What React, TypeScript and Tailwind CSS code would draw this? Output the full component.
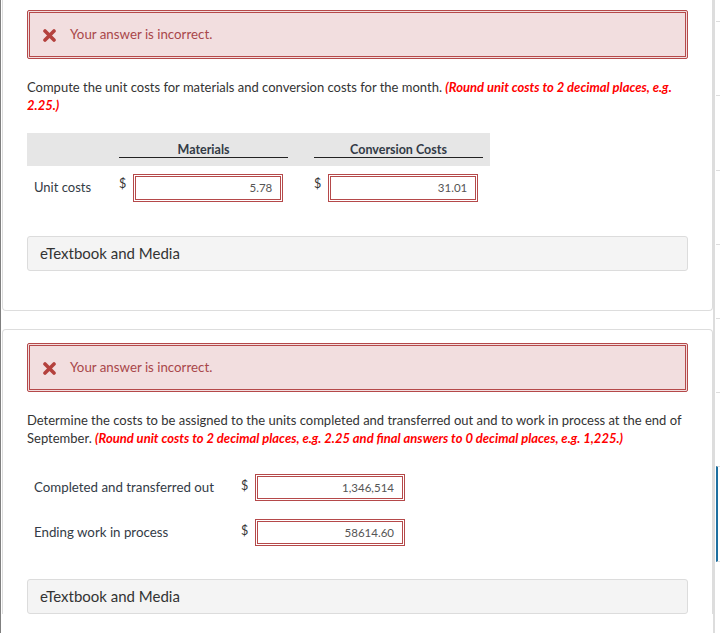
import React from "react";

const font = { fontFamily: "Lato, 'Open Sans', sans-serif" };

function XMark() {
  return (
    <svg width="13" height="13" viewBox="0 0 13 13" className="mt-[1px] shrink-0">
      <path d="M2 2 L11 11 M11 2 L2 11" stroke="#b4413d" strokeWidth="3.6" strokeLinecap="round" />
    </svg>
  );
}

function ErrorBox() {
  return (
    <div className="flex h-[49px] items-center gap-[14px] rounded-[2px] border-[3px] border-double border-[#b5494a] bg-[#f2dedf] pl-[13px]">
      <XMark />
      <span className="pt-px text-[13.3px] text-[#a9474a]">Your answer is incorrect.</span>
    </div>
  );
}

function AnswerInput({ value, h = "h-[28px]" }: { value: string; h?: string }) {
  return (
    <div className={`flex ${h} w-[150px] items-center justify-end border-[3px] border-double border-[#b5494a] bg-white pr-[8px] text-[11.5px] text-[#555]`}>
      {value}
    </div>
  );
}

function MediaBar() {
  return (
    <div className="flex h-[35px] items-center rounded-[3px] border border-[#dcdcdc] bg-[#f4f4f4] pl-[12px] text-[15px] text-[#333]">
      eTextbook and Media
    </div>
  );
}

export default function App() {
  return (
    <div style={font} className="flex h-[633px] w-[720px] overflow-hidden border-l border-[#7f7f7f] bg-white text-[#333]">
      <div className="w-[712px] shrink-0 pl-px">
        {/* Part 1 */}
        <div className="rounded-b-[4px] border border-t-0 border-[#dddddd] px-[24px] pb-[39px] pt-[10px]">
          <ErrorBox />
          <p className="mt-[19px] text-[13px] leading-[18px] text-[#333]">
            Compute the unit costs for materials and conversion costs for the month.{" "}
            <span className="font-bold italic text-[#ff0000]">(Round unit costs to 2 decimal places, e.g. 2.25.)</span>
          </p>

          <div className="mt-[19px] w-[463px]">
            <div className="grid h-[33px] grid-cols-[66px_169px_169px] gap-x-[26px] bg-[#e6e6e6] pr-[7px]">
              <div />
              <div className="flex flex-col justify-end pb-[8px]">
                <div className="border-b border-[#222] text-center text-[12.5px] font-bold leading-[15px] text-[#333b46]">
                  Materials
                </div>
              </div>
              <div className="flex flex-col justify-end pb-[8px]">
                <div className="border-b border-[#222] text-center text-[12.5px] font-bold leading-[15px] text-[#333b46]">
                  Conversion Costs
                </div>
              </div>
            </div>
            <div className="mt-[8px] grid grid-cols-[66px_169px_169px] items-center gap-x-[26px]">
              <span className="whitespace-nowrap pl-[7px] text-[13px] text-[#333b46]">Unit costs</span>
              <div className="flex items-start gap-[7px]">
                <span className="mt-[1px] text-[12.5px]">$</span>
                <AnswerInput value="5.78" />
              </div>
              <div className="flex items-start gap-[7px]">
                <span className="mt-[1px] text-[12.5px]">$</span>
                <AnswerInput value="31.01" />
              </div>
            </div>
          </div>

          <div className="mt-[34px]">
            <MediaBar />
          </div>
        </div>

        {/* Part 2 */}
        <div className="mt-[18px] rounded-t-[4px] border border-b-0 border-[#dddddd] px-[24px] pt-[13px]">
          <ErrorBox />
          <p className="mt-[19px] text-[13px] leading-[18px] text-[#333]">
            Determine the costs to be assigned to the units completed and transferred out and to work in process at the end of
            September.{" "}
            <span className="font-bold italic text-[#ff0000]">
              (Round unit costs to 2 decimal places, e.g. 2.25 and final answers to 0 decimal places, e.g. 1,225.)
            </span>
          </p>

          <div className="mt-[27px] flex flex-col gap-[18px]">
            {[
              ["Completed and transferred out", "1,346,514"],
              ["Ending work in process", "58614.60"],
            ].map(([label, value]) => (
              <div key={label} className="flex items-center">
                <span className="w-[214px] pl-[7px] text-[13.3px] text-[#333b46]">{label}</span>
                <span className="-mt-[3px] w-[14px] text-[12.5px]">$</span>
                <AnswerInput value={value} h="h-[27px]" />
              </div>
            ))}
          </div>

          <div className="mt-[33px]">
            <MediaBar />
          </div>
        </div>
      </div>

      {/* right rail */}
      <div className="flex flex-1 flex-col border-l-2 border-[#dddddd] pl-px">
        <div className="h-[21px]" />
        <div className="h-[74px] border-t border-[#dddddd]" />
        <div className="h-[75px] border-t border-[#dddddd]" />
        <div className="h-[74px] border-t border-[#dddddd]" />
        <div className="h-[74px] border-t border-[#dddddd]" />
        <div className="h-[74px] border-t border-[#dddddd]" />
        <div className="h-[74px] border-t border-[#dddddd]" />
        <div className="h-[96px] border-y border-l-2 border-[#dddddd] border-l-[#1d6fa0]" />
      </div>
    </div>
  );
}
